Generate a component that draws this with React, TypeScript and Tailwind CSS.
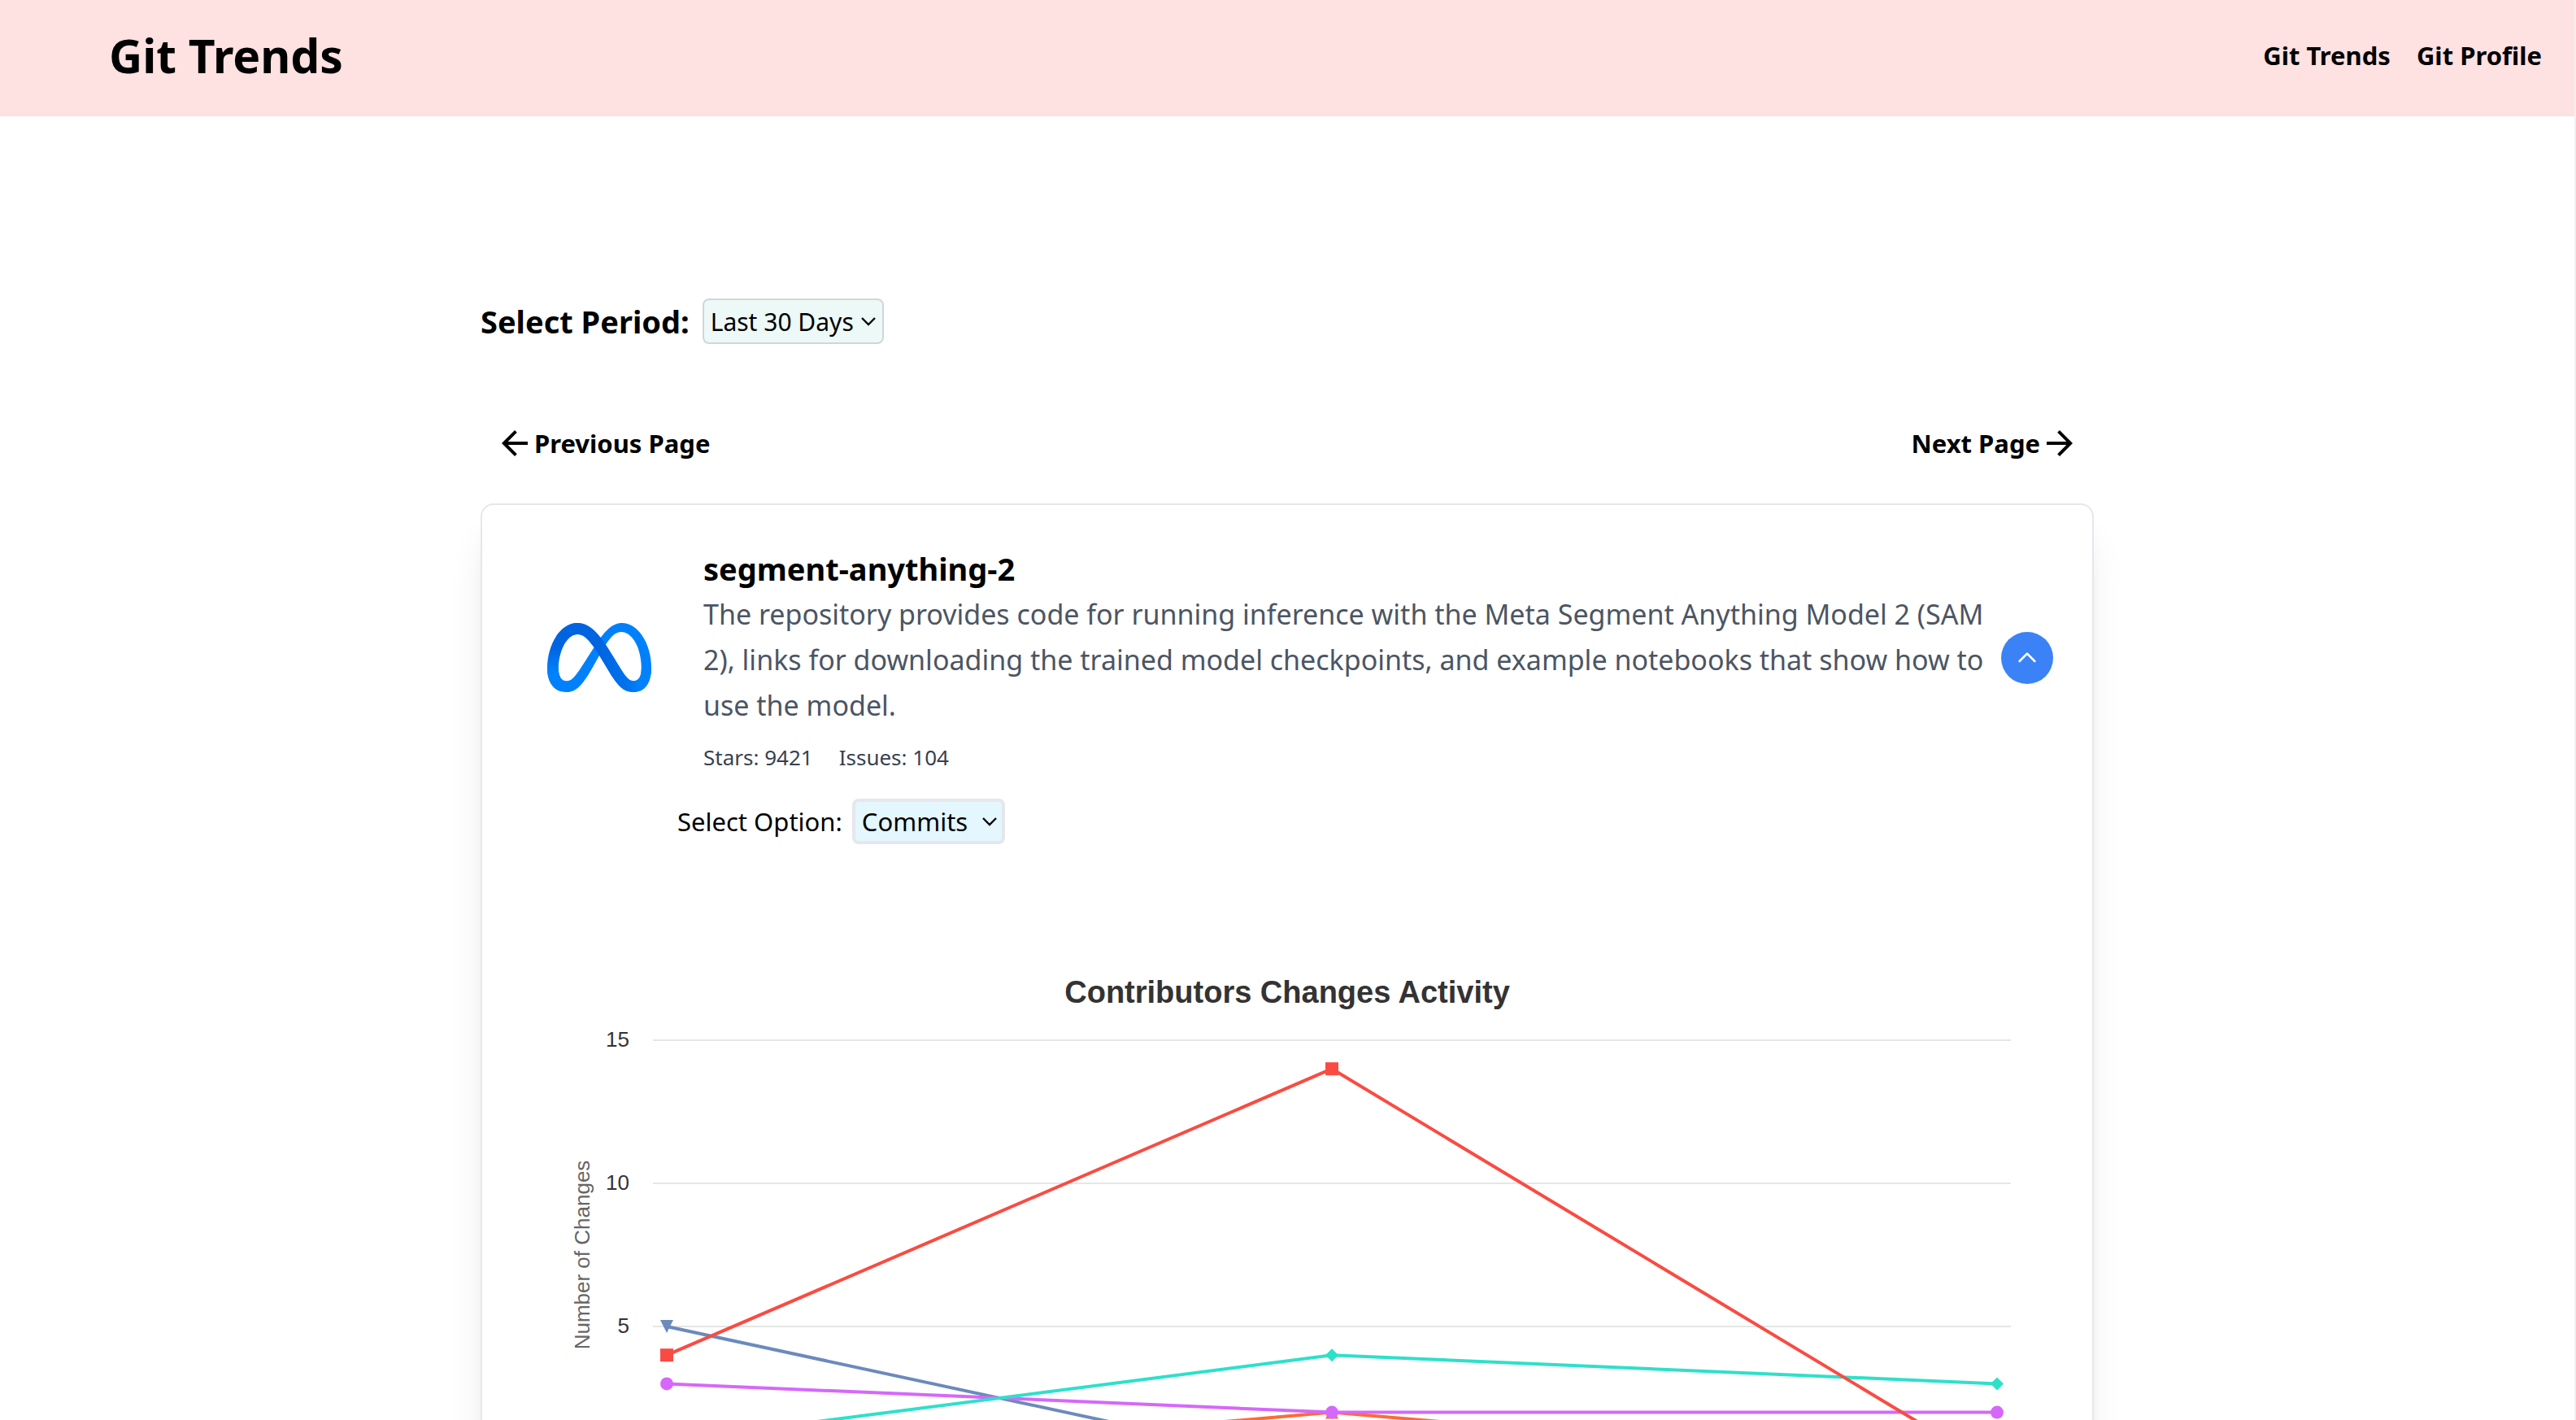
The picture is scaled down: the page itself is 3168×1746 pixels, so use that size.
import React, { useState } from "react";
import { MdArrowBack, MdArrowForward } from "react-icons/md";

type Symbol = "circle" | "square" | "diamond" | "triangle" | "triangleDown";

interface Series {
  name: string;
  color: string;
  symbol: Symbol;
  values: number[];
}

const series: Series[] = [
  { name: "Series 1", color: "#6b8abc", symbol: "triangleDown", values: [5, 0, 0] },
  { name: "Series 2", color: "#fe6a35", symbol: "triangle", values: [0, 2, 0] },
  { name: "Series 3", color: "#d568fb", symbol: "circle", values: [3, 2, 2] },
  { name: "Series 4", color: "#2ee0ca", symbol: "diamond", values: [1, 4, 3] },
  { name: "Series 5", color: "#fa4b42", symbol: "square", values: [4, 14, 0] },
];

const plot = { left: 162, right: 1832, top: 31, unit: 35.2 };
const xs = [179, 997, 1815];
const yOf = (v: number) => plot.top + (15 - v) * plot.unit;

function Marker({ x, y, symbol, color }: { x: number; y: number; symbol: Symbol; color: string }) {
  switch (symbol) {
    case "circle":
      return <circle cx={x} cy={y} r={8} fill={color} />;
    case "square":
      return <rect x={x - 8} y={y - 8} width={16} height={16} fill={color} />;
    case "diamond":
      return <path d={`M${x} ${y - 8}l8 8-8 8-8-8z`} fill={color} />;
    case "triangle":
      return <path d={`M${x} ${y - 8}l8 16h-16z`} fill={color} />;
    default:
      return <path d={`M${x - 8} ${y - 8}h16l-8 16z`} fill={color} />;
  }
}

function Chart() {
  return (
    <figure className="mt-[154px]">
      <figcaption className="text-center font-['Liberation_Sans',Arial,sans-serif] text-[38px] leading-[56px] font-bold text-[#333333]">
        Contributors Changes Activity
      </figcaption>
      <svg
        viewBox="0 0 1884 620"
        className="block w-full font-['Liberation_Sans',Arial,sans-serif] text-[26px]"
        role="img"
        aria-label="Number of changes by contributor"
      >
        {[15, 10, 5].map((v) => (
          <g key={v}>
            <line x1={plot.left} x2={plot.right} y1={yOf(v)} y2={yOf(v)} stroke="#e6e6e6" strokeWidth={2} />
            <text x={133} y={yOf(v) + 8} textAnchor="end" fill="#333333">
              {v}
            </text>
          </g>
        ))}
        <line x1={plot.left} x2={plot.right} y1={yOf(0)} y2={yOf(0)} stroke="#333333" strokeWidth={2} />
        <text transform="translate(84 295) rotate(-90)" textAnchor="middle" fill="#666666">
          Number of Changes
        </text>
        {series.map((s) => (
          <g key={s.name}>
            <polyline
              points={s.values.map((v, i) => `${xs[i]},${yOf(v)}`).join(" ")}
              fill="none"
              stroke={s.color}
              strokeWidth={4}
              strokeLinejoin="round"
              strokeLinecap="round"
            />
            {s.values.map((v, i) => (
              <Marker key={i} x={xs[i]} y={yOf(v)} symbol={s.symbol} color={s.color} />
            ))}
          </g>
        ))}
      </svg>
    </figure>
  );
}

function MetaLogo() {
  return (
    <svg viewBox="0 0 287.56 191" className="w-32 shrink-0" role="img" aria-label="Meta">
      <defs>
        <linearGradient id="meta-band" x1="62.34" y1="101.45" x2="260.34" y2="91.45" gradientTransform="matrix(1 0 0 -1 0 192)" gradientUnits="userSpaceOnUse">
          <stop offset="0" stopColor="#0064e1" />
          <stop offset="0.4" stopColor="#0064e1" />
          <stop offset="0.83" stopColor="#0073ee" />
          <stop offset="1" stopColor="#0082fb" />
        </linearGradient>
        <linearGradient id="meta-left" x1="41.42" y1="53" x2="41.42" y2="126" gradientTransform="matrix(1 0 0 -1 0 192)" gradientUnits="userSpaceOnUse">
          <stop offset="0" stopColor="#0082fb" />
          <stop offset="1" stopColor="#0064e0" />
        </linearGradient>
      </defs>
      <path
        fill="#0081fb"
        d="M31.06,126c0,11,2.41,19.41,5.56,24.51A19,19,0,0,0,53.19,160c8.1,0,15.51-2,29.79-21.76,11.44-15.83,24.92-38,34-52l15.36-23.6c10.67-16.39,23-34.61,37.18-47C181.07,5.6,193.54,0,206.09,0c21.07,0,41.14,12.21,56.5,35.11,16.81,25.08,25,56.67,25,89.27,0,19.38-3.82,33.62-10.32,44.87C271,180.13,258.72,191,238.13,191V160c17.63,0,22-16.2,22-34.74,0-26.42-6.16-55.74-19.73-76.69-9.63-14.86-22.11-23.94-35.84-23.94-14.85,0-26.8,11.2-40.23,31.17-7.14,10.61-14.47,23.54-22.7,38.13l-9.06,16c-18.2,32.27-22.81,39.62-31.91,51.75C84.74,183,71.12,191,53.19,191c-21.27,0-34.72-9.21-43-23.09C3.34,156.6,0,141.76,0,124.85Z"
      />
      <path
        fill="url(#meta-band)"
        d="M24.49,37.3C38.73,15.35,59.28,0,82.85,0c13.65,0,27.22,4,41.39,15.61,15.5,12.65,32,33.48,52.63,67.81l7.39,12.32c17.84,29.72,28,45,33.93,52.22,7.64,9.26,13,12,19.94,12,17.63,0,22-16.2,22-34.74l27.4-.86c0,19.38-3.82,33.62-10.32,44.87C271,180.13,258.72,191,238.13,191c-12.8,0-24.14-2.78-36.68-14.61-9.64-9.08-20.91-25.21-29.58-39.71L146.08,93.6c-12.94-21.62-24.81-37.74-31.68-45C107,40.71,97.51,31.23,82.35,31.23c-12.27,0-22.69,8.61-31.41,21.78Z"
      />
      <path
        fill="url(#meta-left)"
        d="M82.35,31.23c-12.27,0-22.69,8.61-31.41,21.78C38.61,71.62,31.06,99.34,31.06,126c0,11,2.41,19.41,5.56,24.51L10.14,167.91C3.34,156.6,0,141.76,0,124.85,0,94.1,8.44,62.05,24.49,37.3,38.73,15.35,59.28,0,82.85,0Z"
      />
    </svg>
  );
}

function SelectArrow() {
  return (
    <svg
      viewBox="0 0 18 11"
      className="pointer-events-none absolute top-[23px] right-[10px] w-[18px]"
      fill="none"
      stroke="currentColor"
      strokeWidth={2.4}
      aria-hidden="true"
    >
      <path d="M1 1l8 8 8-8" />
    </svg>
  );
}

export default function App() {
  const [period, setPeriod] = useState("30");
  const [option, setOption] = useState("commits");
  const [open, setOpen] = useState(true);

  return (
    <div className="h-screen overflow-y-auto border-r-2 border-[#f1f1f1] bg-white font-['Noto_Sans','Segoe_UI',sans-serif] text-black [scrollbar-width:none]">
      <header className="flex h-[143px] items-center justify-between bg-[#fee1e1] pr-10 pb-2 pl-[134px]">
        <h1 className="text-[57px] leading-[80px] font-bold">Git Trends</h1>
        <nav className="flex gap-8 text-[31px] leading-[48px] font-bold">
          <a href="#trends">Git Trends</a>
          <a href="#profile">Git Profile</a>
        </nav>
      </header>

      <main className="mx-auto max-w-[2048px] px-8 pt-[224px]">
        <div className="flex items-center gap-4">
          <label htmlFor="period" className="text-[38px] leading-[56px] font-bold">
            Select Period:
          </label>
          <span className="relative">
            <select
              id="period"
              value={period}
              onChange={(e) => setPeriod(e.target.value)}
              className="block h-14 w-[223px] appearance-none rounded-lg border-2 border-[#d1d5db] bg-[#edf9f7] pl-2 text-[30px]"
            >
              <option value="7">Last 7 Days</option>
              <option value="30">Last 30 Days</option>
            </select>
            <SelectArrow />
          </span>
        </div>

        <div className="mt-[98px] flex items-center justify-between px-[18px] text-[31px] leading-[48px] font-bold">
          <button type="button" className="flex items-center">
            <MdArrowBack className="size-12" />
            Previous Page
          </button>
          <button type="button" className="flex items-center">
            Next Page
            <MdArrowForward className="size-12" />
          </button>
        </div>

        <article className="mt-[50px] rounded-2xl border-2 border-[#e5e7eb] bg-white px-12 pt-[46px] pb-12 shadow-[0_40px_50px_-10px_rgba(0,0,0,0.1),0_16px_20px_-12px_rgba(0,0,0,0.1)]">
          <div className="flex items-center gap-16 pl-8">
            <MetaLogo />
            <div className="min-w-0 flex-1 pt-1">
              <h2 className="text-[38px] leading-[56px] font-bold">segment-anything-2</h2>
              <p className="text-[34px] leading-[56px] text-[#4b5563]">
                The repository provides code for running inference with the Meta Segment Anything Model 2 (SAM
                2), links for downloading the trained model checkpoints, and example notebooks that show how to
                use the model.
              </p>
              <div className="mt-4 flex gap-8 text-[26px] leading-[40px] text-[#374151]">
                <span>Stars: 9421</span>
                <span>Issues: 104</span>
              </div>
            </div>
            <button
              type="button"
              aria-label="Toggle details"
              aria-expanded={open}
              onClick={() => setOpen(!open)}
              className="-ml-12 flex size-16 shrink-0 items-center justify-center rounded-full bg-[#3b82f6] text-white"
            >
              <svg viewBox="0 0 24 24" className="size-8" fill="none" stroke="currentColor" strokeWidth={2} strokeLinecap="round" strokeLinejoin="round" aria-hidden="true">
                <path d={open ? "M5 15l7-7 7 7" : "M19 9l-7 7-7-7"} />
              </svg>
            </button>
          </div>

          {open && (
            <>
              <div className="mt-[31px] flex items-center gap-3 pl-48 text-[31px] leading-[48px]">
                <label htmlFor="option">Select Option:</label>
                <span className="relative">
                  <select
                    id="option"
                    value={option}
                    onChange={(e) => setOption(e.target.value)}
                    className="block h-14 w-[188px] appearance-none rounded-lg border-4 border-[#e5e7eb] bg-[#e4f6fe] pl-2 text-[31px]"
                  >
                    <option value="commits">Commits</option>
                    <option value="changes">Changes</option>
                  </select>
                  <SelectArrow />
                </span>
              </div>
              <Chart />
            </>
          )}
        </article>
      </main>
    </div>
  );
}
